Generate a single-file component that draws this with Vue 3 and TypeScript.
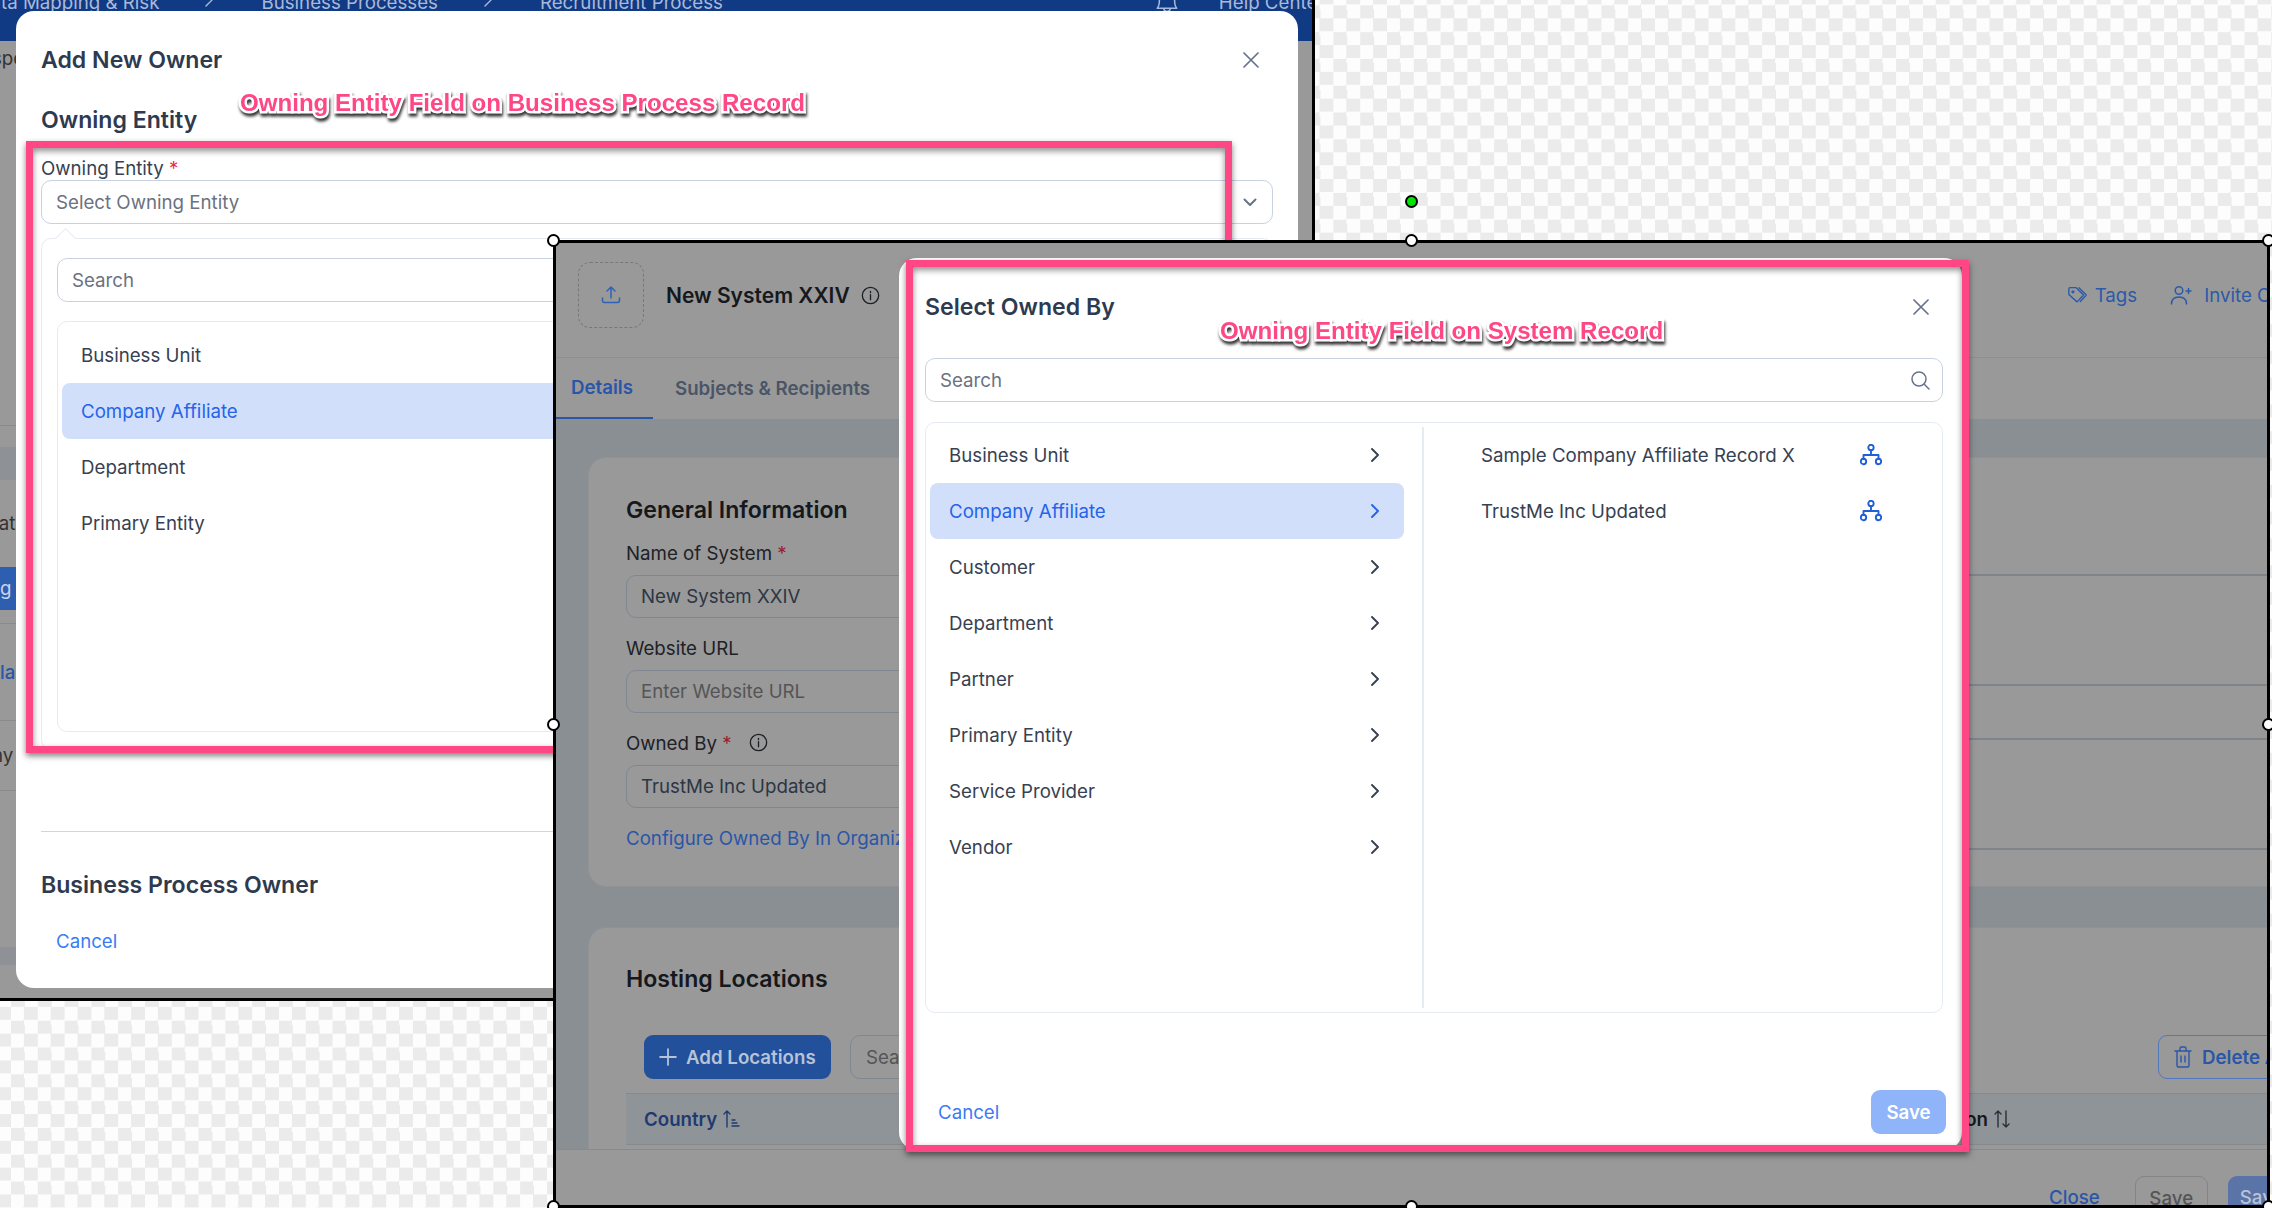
<template>
  <div class="canvas">
    <div class="checker-top"></div>

    <!-- first screenshot: business process record -->
    <section class="win-one">
      <div class="top-bar">
        <span class="crumb first">Data Mapping &amp; Risk</span>
        <svg class="crumb-sep" viewBox="0 0 8 14"><path d="M1 1l6 6-6 6" /></svg>
        <span class="crumb">Business Processes</span>
        <svg class="crumb-sep" viewBox="0 0 8 14"><path d="M1 1l6 6-6 6" /></svg>
        <span class="crumb">Recruitment Process</span>
        <svg class="bell" viewBox="0 0 24 24"><path d="M5 7c0 6-2 8-2 8h18s-2-2-2-8M9 15c0 2 1 3 3 3s3-1 3-3" /></svg>
        <span class="crumb help">Help Center</span>
      </div>
      <div class="behind">
        <div class="behind-row r1">spe</div>
        <div class="behind-row r2"></div>
        <div class="behind-row r3"></div>
        <div class="behind-row r4">cat</div>
        <div class="behind-row r5"><span class="stub-btn">g</span></div>
        <div class="behind-row r6 blue">la</div>
        <div class="behind-row r7">ny</div>
        <div class="behind-row r8"></div>
        <div class="behind-row r9"></div>
      </div>

      <div class="modal">
        <div class="modal-head">
          <h2>Add New Owner</h2>
          <svg class="close" viewBox="0 0 16 16"><path d="M1 1l14 14M15 1L1 15" /></svg>
        </div>
        <h3 class="section">Owning Entity</h3>
        <label class="label">Owning Entity <em>*</em></label>
        <div class="select">
          <span>Select Owning Entity</span>
          <svg viewBox="0 0 14 9"><path d="M1.5 1.5L7 7l5.5-5.5" /></svg>
        </div>
        <div class="panel">
          <span class="notch"></span>
          <div class="search">Search</div>
          <div class="panel-list">
            <div
              v-for="item in ownerTypes"
              :key="item"
              class="panel-row"
              :class="{ active: item === 'Company Affiliate' }"
            >
              {{ item }}
            </div>
          </div>
        </div>
        <hr class="rule" />
        <h3 class="section second">Business Process Owner</h3>
        <a class="cancel">Cancel</a>
      </div>

      <div class="frame frame-one"></div>
      <div class="note note-one">Owning Entity Field on Business Process Record</div>
    </section>

    <!-- second screenshot: system record -->
    <section class="win-two">
      <header class="sys-head">
        <div class="upload">
          <svg viewBox="0 0 20 20"><path d="M10 2v11M6 6l4-4 4 4M1.500 13v2.500a2 2 0 0 0 2 2h13a2 2 0 0 0 2-2V13" /></svg>
        </div>
        <h1>New System XXIV</h1>
        <svg class="info" viewBox="0 0 20 20"><circle cx="10" cy="10" r="8.600" /><path d="M10 9v5.500M10 5.600v1.400" /></svg>
        <div class="actions">
          <span class="action">
            <svg viewBox="0 0 24 20"><path d="M2 3.500A1.500 1.500 0 0 1 3.500 2H10l8 8-7 7.500L2 9.500zM13 2l8 8-6.500 7" /><circle cx="6.500" cy="6.500" r="1" /></svg>
            Tags
          </span>
          <span class="action invite">
            <svg viewBox="0 0 22 20"><circle cx="9" cy="5.500" r="3.800" /><path d="M1.500 19c0-4.500 3-7 7.500-7s7.500 2.500 7.500 7M18.500 3.500v5M16 6h5" /></svg>
            Invite Collaborators
          </span>
        </div>
      </header>
      <nav class="tabs">
        <span class="tab on">Details</span>
        <span class="tab">Subjects &amp; Recipients</span>
      </nav>
      <main class="sys-main">
        <div class="card card-general">
          <div class="col-left">
            <h4>General Information</h4>
            <label class="f-label first">Name of System <em>*</em></label>
            <div class="f-input">New System XXIV</div>
            <label class="f-label">Website URL</label>
            <div class="f-input ph">Enter Website URL</div>
            <label class="f-label">Owned By <em>*</em>
              <svg class="info small" viewBox="0 0 20 20"><circle cx="10" cy="10" r="8.600" /><path d="M10 9v5.500M10 5.600v1.400" /></svg>
            </label>
            <div class="f-input">TrustMe Inc Updated</div>
            <a class="f-link">Configure Owned By In Organization Settings</a>
          </div>
          <div class="col-right">
            <div class="text-box"></div>
            <div class="text-box"></div>
          </div>
        </div>
        <div class="card card-hosting">
          <h4>Hosting Locations</h4>
          <div class="toolbar">
            <button class="btn-add">
              <svg viewBox="0 0 16 16"><path d="M8 1v14M1 8h14" /></svg>
              Add Locations
            </button>
            <div class="tool-search">Search</div>
            <button class="btn-delete">
              <svg viewBox="0 0 18 22"><path d="M1 5h16M6 5V2.500A1.500 1.500 0 0 1 7.500 1h3A1.500 1.500 0 0 1 12 2.500V5M3 5v14.500A1.500 1.500 0 0 0 4.500 21h9a1.500 1.500 0 0 0 1.500-1.500V5M7 10v6M11 10v6" /></svg>
              Delete All
            </button>
          </div>
          <div class="table-head">
            <span class="th-country">Country
              <svg viewBox="0 0 18 20"><path d="M5 18V2M2 5l3-3 3 3M10 11h3M10 14h5M10 17h7" /></svg>
            </span>
            <span class="th-location">Location
              <svg viewBox="0 0 18 20"><path d="M5 18V2M2 5l3-3 3 3M13 2v16M10 15l3 3 3-3" /></svg>
            </span>
          </div>
        </div>
      </main>
      <footer class="sys-foot">
        <a class="foot-close">Close</a>
        <span class="foot-save">Save</span>
        <span class="foot-primary">Save &amp; Close</span>
      </footer>

      <div class="dialog">
        <div class="modal-head dialog-head">
          <h2>Select Owned By</h2>
          <svg class="close" viewBox="0 0 16 16"><path d="M1 1l14 14M15 1L1 15" /></svg>
        </div>
        <div class="search wide">
          <span>Search</span>
          <svg viewBox="0 0 20 20"><circle cx="9" cy="9" r="7" /><path d="M14 14l5 5" /></svg>
        </div>
        <div class="picker">
          <div class="picker-left">
            <div
              v-for="item in entityTypes"
              :key="item"
              class="picker-row"
              :class="{ active: item === 'Company Affiliate' }"
            >
              <span>{{ item }}</span>
              <svg viewBox="0 0 10 16"><path d="M2 2l6 6-6 6" /></svg>
            </div>
          </div>
          <div class="picker-right">
            <div v-for="rec in records" :key="rec" class="record">
              <span>{{ rec }}</span>
              <svg viewBox="0 0 22 22">
                <circle cx="11" cy="3.500" r="2.700" />
                <circle cx="3.500" cy="17.500" r="2.700" />
                <circle cx="18.500" cy="17.500" r="2.700" />
                <path d="M11 6.200V11M3.500 14.800V11h15v3.800" />
              </svg>
            </div>
          </div>
        </div>
        <div class="dialog-foot">
          <a class="cancel flat">Cancel</a>
          <button class="btn-save">Save</button>
        </div>
      </div>
    </section>

    <div class="frame frame-two"></div>
    <div class="note note-two">Owning Entity Field on System Record</div>

    <span
      v-for="h in handles"
      :key="h.x + '-' + h.y"
      class="handle"
      :style="{ left: h.x + 'px', top: h.y + 'px' }"
    ></span>
    <span class="handle rotate"></span>
  </div>
</template>

<script setup lang="ts">
const ownerTypes = ['Business Unit', 'Company Affiliate', 'Department', 'Primary Entity']

const entityTypes = [
  'Business Unit',
  'Company Affiliate',
  'Customer',
  'Department',
  'Partner',
  'Primary Entity',
  'Service Provider',
  'Vendor',
]

const records = ['Sample Company Affiliate Record X', 'TrustMe Inc Updated']

// selection handles around the pasted screenshot
const handles = [
  { x: 553, y: 240 },
  { x: 1411, y: 240 },
  { x: 2268, y: 240 },
  { x: 553, y: 724 },
  { x: 2268, y: 724 },
  { x: 553, y: 1206 },
  { x: 1411, y: 1206 },
  { x: 2268, y: 1206 },
]
</script>

<style>
html,
body {
  margin: 0;
  padding: 0;
}
</style>

<style scoped>
* {
  box-sizing: border-box;
}
h1,
h2,
h3,
h4 {
  margin: 0;
}
em {
  font-style: normal;
  color: #ef2b3d;
}
svg {
  display: block;
  flex: none;
  fill: none;
  stroke-linecap: round;
  stroke-linejoin: round;
}
.canvas {
  position: relative;
  width: 2272px;
  height: 1208px;
  overflow: hidden;
  font-family: Inter, 'Liberation Sans', sans-serif;
  font-size: 18.7px;
  color: #374151;
  background-color: #fdfdfd;
  background-image: conic-gradient(#ebebeb 25%, transparent 0 50%, #ebebeb 0 75%, transparent 0);
  background-size: 26.8px 26.8px;
  background-position: 11px 15.4px;
}
.checker-top {
  position: absolute;
  left: 1315px;
  top: 0;
  width: 957px;
  height: 240px;
  background-color: #fdfdfd;
  background-image: conic-gradient(#ebebeb 25%, transparent 0 50%, #ebebeb 0 75%, transparent 0);
  background-size: 26.8px 26.8px;
  background-position: -8.4px 18.3px;
}

/* window one */
.win-one {
  position: absolute;
  left: 0;
  top: 0;
  width: 1315px;
  height: 1001px;
  overflow: hidden;
  background: #999;
  border-right: 3px solid #000;
  border-bottom: 3px solid #000;
}
.top-bar {
  display: flex;
  align-items: flex-start;
  height: 41px;
  overflow: hidden;
  background: #113a84;
  color: #a9b9d8;
}
.crumb {
  flex: none;
  margin-top: -9px;
  line-height: 24px;
  white-space: nowrap;
}
.crumb.first {
  margin-left: -23px;
}
.crumb-sep {
  width: 8px;
  height: 14px;
  margin: -7px 48px 0 46px;
  stroke: #a9b9d8;
  stroke-width: 1.4;
}
.bell {
  width: 26px;
  height: 26px;
  margin: -8px 0 0 431px;
  stroke: #a9b9d8;
  stroke-width: 1.4;
}
.help {
  margin-left: 39px;
}
.behind {
  display: flex;
  flex-direction: column;
  height: 957px;
  color: #333;
}
.behind-row {
  flex: none;
  display: flex;
  align-items: center;
  white-space: nowrap;
}
.r1 {
  height: 385px;
  align-items: flex-start;
  padding-top: 6px;
  margin-left: -8px;
  border-bottom: 1px solid #8a8a8a;
}
.r2 {
  height: 21px;
}
.r3 {
  height: 33px;
  background: #8e9296;
}
.r4 {
  height: 87px;
  margin-left: -12px;
}
.r5 {
  height: 57px;
  align-items: flex-start;
  border-bottom: 1px solid #8a8a8a;
}
.stub-btn {
  display: block;
  width: 16px;
  height: 43px;
  line-height: 43px;
  background: #2e5eb0;
  color: #c8d4ea;
}
.r6 {
  height: 97px;
  color: #2a56a8;
  font-weight: 500;
  border-bottom: 1px solid #8a8a8a;
}
.r7 {
  height: 70px;
  margin-left: -8px;
  border-bottom: 1px solid #8a8a8a;
}
.r8 {
  height: 156px;
}
.r9 {
  height: 18px;
  background: #8e9296;
}

.modal {
  position: absolute;
  left: 16px;
  top: 11px;
  width: 1282px;
  height: 977px;
  padding: 0 25px;
  background: #fff;
  border-radius: 18px;
}
.modal-head {
  display: flex;
  align-items: center;
  justify-content: space-between;
  height: 98px;
  padding-bottom: 1px;
}
.modal-head h2 {
  font-size: 23.1px;
  font-weight: 600;
  color: #2d3a4f;
}
.close {
  width: 16px;
  height: 16px;
  margin-right: 14px;
  stroke: #66738a;
  stroke-width: 1.7;
}
.section {
  height: 22px;
  line-height: 22px;
  font-size: 23.1px;
  font-weight: 600;
  color: #2d3a4f;
}
.section.second {
  height: 26px;
  line-height: 26px;
  margin-top: 40px;
}
.label {
  display: block;
  height: 22px;
  margin-top: 27px;
  line-height: 22px;
}
.select {
  display: flex;
  align-items: center;
  justify-content: space-between;
  height: 44px;
  padding: 0 15px 0 14px;
  border: 1px solid #c7d2e2;
  border-radius: 10px;
  color: #6b7280;
}
.select svg {
  width: 14px;
  height: 9px;
  stroke: #66738a;
  stroke-width: 2;
}
.panel {
  position: relative;
  height: 512px;
  margin-top: 14px;
  padding: 19px 15px 0;
  border: 1px solid #e6ebf3;
  border-radius: 10px;
}
.notch {
  position: absolute;
  left: 16px;
  top: -8px;
  width: 15px;
  height: 15px;
  transform: rotate(45deg);
  background: #fff;
  border-left: 1px solid #e6ebf3;
  border-top: 1px solid #e6ebf3;
}
.search {
  position: relative;
  display: flex;
  align-items: center;
  justify-content: space-between;
  height: 44px;
  padding: 0 14px;
  border: 1px solid #c7d2e2;
  border-radius: 10px;
  color: #6b7280;
}
.search svg {
  width: 20px;
  height: 20px;
  margin-right: -2px;
  stroke: #66738a;
  stroke-width: 1.5;
}
.panel-list {
  height: 411px;
  margin-top: 19px;
  padding: 5px 4px;
  border: 1px solid #e6ebf3;
  border-radius: 10px;
}
.panel-row {
  display: flex;
  align-items: center;
  height: 56px;
  padding-left: 19px;
  border-radius: 8px;
}
.active {
  background: #d1dffb;
  color: #2563eb;
}
.rule {
  height: 1px;
  margin: 81px 0 0;
  border: 0;
  background: #d1d5e0;
}
.cancel {
  display: block;
  margin: 32px 0 0 15px;
  line-height: 24px;
  color: #3b7bf6;
}
.cancel.flat {
  margin: 2px 0 0 13px;
}

/* annotations */
.frame {
  position: absolute;
  border: 7px solid #ff4785;
  box-shadow: 0 3px 6px rgba(0, 0, 0, 0.5), inset 0 3px 6px rgba(0, 0, 0, 0.45);
  pointer-events: none;
}
.frame-one {
  left: 26px;
  top: 141px;
  width: 1206px;
  height: 612px;
}
.frame-two {
  left: 906px;
  top: 260px;
  width: 1063px;
  height: 892px;
}
.note {
  position: absolute;
  font-family: 'Liberation Sans', Arial, sans-serif;
  font-size: 24.1px;
  font-weight: 700;
  line-height: 30px;
  white-space: nowrap;
  color: #ff4785;
  -webkit-text-stroke: 5px #fff;
  paint-order: stroke fill;
  filter: drop-shadow(1px 3px 1.5px rgba(0, 0, 0, 0.8));
}
.note-one {
  left: 240px;
  top: 88px;
}
.note-two {
  left: 1220px;
  top: 316px;
}

/* window two */
.win-two {
  position: absolute;
  left: 553px;
  top: 240px;
  display: flex;
  flex-direction: column;
  width: 1717px;
  height: 968px;
  overflow: hidden;
  background: #999;
  border: 3px solid #000;
}
.sys-head {
  flex: none;
  display: flex;
  align-items: center;
  height: 115px;
  padding: 0 0 10px 22px;
  border-bottom: 1px solid #8f8f8f;
}
.upload {
  flex: none;
  display: flex;
  align-items: center;
  justify-content: center;
  width: 66px;
  height: 66px;
  border: 1.5px dashed #787878;
  border-radius: 12px;
}
.upload svg {
  width: 20px;
  height: 20px;
  stroke: #2f62b6;
  stroke-width: 1.5;
}
.sys-head h1 {
  flex: none;
  margin-left: 22px;
  font-size: 21px;
  font-weight: 600;
  white-space: nowrap;
  color: #15181c;
}
.info {
  width: 19px;
  height: 19px;
  margin-left: 11px;
  stroke: #1d2024;
  stroke-width: 1.4;
}
.info.small {
  display: inline-block;
  margin: 0 0 0 17px;
  vertical-align: -2px;
}
.actions {
  display: flex;
  flex: none;
  gap: 33px;
  margin-left: 1187px;
  color: #2c5aa8;
}
.action {
  display: flex;
  align-items: center;
  gap: 6px;
  white-space: nowrap;
}
.action.invite {
  gap: 12px;
}
.action svg {
  width: 22px;
  height: 20px;
  stroke: #2c5aa8;
  stroke-width: 1.5;
}
.tabs {
  flex: none;
  display: flex;
  height: 61px;
}
.tab {
  display: flex;
  align-items: center;
  padding: 0 22px;
  font-weight: 600;
  color: #4a5566;
}
.tab.on {
  width: 97px;
  padding: 0 0 0 15px;
  color: #2a56a8;
  border-bottom: 2px solid #2a56a8;
}
.sys-main {
  flex: 1;
  min-height: 0;
  overflow: hidden;
  padding: 38px 0 0 32px;
  background: #8a8f93;
}
.card {
  width: 1800px;
  padding-left: 37px;
  background: #999;
  border: 1px solid #8f9296;
  border-radius: 18px;
}
.card h4 {
  height: 28px;
  line-height: 28px;
  font-size: 23.1px;
  font-weight: 600;
  color: #15181c;
}
.card-general {
  display: flex;
  height: 430px;
  padding-top: 38px;
}
.col-left {
  flex: none;
  width: 800px;
  color: #1e2125;
}
.col-right {
  flex: none;
  display: flex;
  flex-direction: column;
  gap: 52px;
  width: 900px;
  margin: 78px 0 0 20px;
}
.text-box {
  height: 112px;
  border-top: 2px solid #7f8488;
  border-bottom: 2px solid #7f8488;
}
.f-label {
  display: block;
  height: 22px;
  margin: 19px 0 11px;
  line-height: 24px;
}
.f-label.first {
  margin-top: 18px;
}
.f-label em {
  color: #96202e;
}
.f-input {
  display: flex;
  align-items: center;
  height: 43px;
  padding-left: 14px;
  border: 1px solid #7f8793;
  border-radius: 10px;
  color: #2c3644;
}
.f-input.ph {
  color: #555;
}
.f-link {
  display: block;
  margin-top: 20px;
  line-height: 22px;
  color: #2a56a8;
}
.card-hosting {
  height: 400px;
  margin-top: 40px;
  padding-top: 37px;
}
.toolbar {
  display: flex;
  height: 44px;
  margin-top: 42px;
  padding-left: 18px;
}
.toolbar button {
  display: flex;
  align-items: center;
  flex: none;
  height: 44px;
  font-family: inherit;
  font-size: 18.7px;
  font-weight: 600;
  border-radius: 9px;
  white-space: nowrap;
}
.btn-add {
  gap: 9px;
  width: 187px;
  padding: 0 0 0 15px;
  background: #22509a;
  color: #b6c3d9;
  border: 0;
}
.btn-add svg {
  width: 18px;
  height: 18px;
  stroke: #b6c3d9;
  stroke-width: 1.6;
}
.tool-search {
  flex: none;
  display: flex;
  align-items: center;
  width: 300px;
  height: 44px;
  margin-left: 19px;
  padding-left: 15px;
  border: 1px solid #7f8793;
  border-radius: 10px;
  color: #555;
}
.btn-delete {
  gap: 10px;
  width: 200px;
  margin-left: 1008px;
  padding: 0 0 0 15px;
  background: transparent;
  color: #2a56a8;
  border: 1px solid #4f79bd;
}
.btn-delete svg {
  width: 18px;
  height: 22px;
  stroke: #2a56a8;
  stroke-width: 1.4;
}
.table-head {
  display: flex;
  align-items: center;
  height: 52px;
  margin-top: 14px;
  padding-left: 18px;
  background: #8f9499;
  border-top: 1px solid #858a8f;
  border-bottom: 1px solid #858a8f;
  font-weight: 600;
}
.table-head svg {
  width: 18px;
  height: 20px;
  stroke-width: 1.4;
}
.table-head span {
  display: flex;
  align-items: center;
  gap: 5px;
  white-space: nowrap;
}
.th-country {
  flex: none;
  width: 1266px;
  color: #1f3a70;
}
.th-country svg {
  stroke: #1f3a70;
}
.th-location {
  color: #15181c;
}
.th-location svg {
  stroke: #2a3038;
}
.sys-foot {
  position: relative;
  flex: none;
  display: flex;
  align-items: flex-start;
  height: 56px;
  padding: 26px 0 0 1493px;
  background: #999;
  border-top: 1px solid #8a8a8a;
  white-space: nowrap;
}
.foot-close {
  margin-top: 10px;
  line-height: 24px;
  font-weight: 500;
  color: #2a56a8;
}
.foot-save {
  flex: none;
  width: 73px;
  height: 44px;
  margin-left: 35px;
  line-height: 44px;
  text-align: center;
  font-weight: 500;
  color: #555;
  border: 1px solid #858585;
  border-radius: 9px;
}
.foot-primary {
  flex: none;
  width: 120px;
  height: 44px;
  margin-left: 20px;
  padding-left: 12px;
  line-height: 44px;
  font-weight: 500;
  color: #b9c3d6;
  background: #5a74a8;
  border-radius: 9px;
}

/* owned by dialog */
.dialog {
  position: absolute;
  left: 343px;
  top: 15px;
  display: flex;
  flex-direction: column;
  width: 1063px;
  height: 892px;
  padding: 0 19px 0 26px;
  overflow: hidden;
  background: #fff;
  border-radius: 18px;
}
.dialog-head {
  flex: none;
  margin-bottom: 2px;
}
.search.wide {
  flex: none;
}
.picker {
  flex: none;
  display: flex;
  height: 591px;
  margin-top: 20px;
  padding: 4px 0;
  border: 1px solid #e6ebf3;
  border-radius: 10px;
}
.picker-left {
  flex: none;
  width: 498px;
  padding: 0 18px 0 4px;
  border-right: 2px solid #e6ebf3;
}
.picker-row {
  display: flex;
  align-items: center;
  justify-content: space-between;
  height: 56px;
  padding: 0 24px 0 19px;
  border-radius: 8px;
}
.picker-row svg {
  width: 10px;
  height: 16px;
  stroke: currentColor;
  stroke-width: 1.9;
}
.picker-right {
  flex: none;
  width: 458px;
  padding-left: 57px;
}
.record {
  display: flex;
  align-items: center;
  justify-content: space-between;
  height: 56px;
}
.record svg {
  width: 22px;
  height: 22px;
  stroke: #1f5fd8;
  stroke-width: 1.9;
}
.dialog-foot {
  flex: none;
  display: flex;
  align-items: center;
  justify-content: space-between;
  height: 44px;
  margin: 77px -3px 0 0;
}
.btn-save {
  width: 75px;
  height: 44px;
  font-family: inherit;
  font-size: 18.7px;
  font-weight: 600;
  color: #fff;
  background: #8fb4f9;
  border: 0;
  border-radius: 9px;
}

.handle {
  position: absolute;
  width: 13px;
  height: 13px;
  margin: -6.5px 0 0 -6.5px;
  background: #fff;
  border: 2px solid #000;
  border-radius: 50%;
}
.handle.rotate {
  left: 1411px;
  top: 201px;
  background: #00e600;
}
</style>
